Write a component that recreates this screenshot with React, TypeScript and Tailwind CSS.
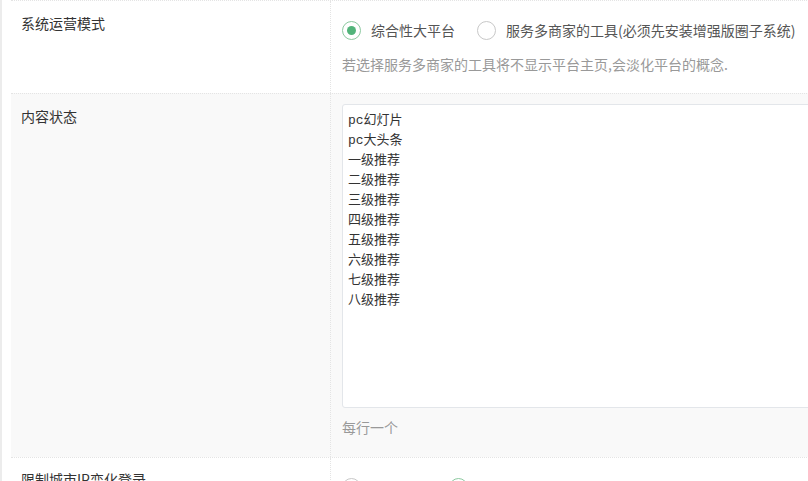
import React from "react";

const font = { fontFamily: '"Noto Sans CJK SC", "Liberation Sans", sans-serif' };

function Radio({ checked, label }: { checked?: boolean; label: string }) {
  return (
    <label className="flex items-center gap-[10px] mr-[22px] text-[14px] text-[#555] leading-[20px]">
      <span
        className={
          "w-[19px] h-[19px] rounded-full border flex items-center justify-center bg-white " +
          (checked ? "border-[#8cc9a0]" : "border-[#c8c8c8]")
        }
      >
        {checked && <span className="w-[9px] h-[9px] rounded-full bg-[#52b47a]" />}
      </span>
      <span>{label}</span>
    </label>
  );
}

export default function App() {
  const lines = [
    "pc幻灯片",
    "pc大头条",
    "一级推荐",
    "二级推荐",
    "三级推荐",
    "四级推荐",
    "五级推荐",
    "六级推荐",
    "七级推荐",
    "八级推荐",
  ];
  return (
    <div
      className="w-[808px] h-[481px] overflow-hidden bg-white border-l-2 border-[#ececec] pl-[9px]"
      style={font}
    >
      <div className="w-[900px]">
        {/* Row 1 */}
        <div className="grid grid-cols-[320px_1fr] border-t border-dotted border-[#e4e4e4] bg-white">
          <div className="pl-[10px] pt-[12px] text-[14px] leading-[20px] text-[#333] border-r border-dotted border-[#e4e4e4]">
            系统运营模式
          </div>
          <div className="pl-[11px] pt-[18px] pb-[19px]">
            <div className="flex items-center h-[22px]">
              <Radio checked label="综合性大平台" />
              <Radio label="服务多商家的工具(必须先安装增强版圈子系统)" />
            </div>
            <div className="mt-[13px] text-[14px] leading-[20px] text-[#999]">
              若选择服务多商家的工具将不显示平台主页,会淡化平台的概念.
            </div>
          </div>
        </div>
        {/* Row 2 */}
        <div className="grid grid-cols-[320px_1fr] border-t border-dotted border-[#e4e4e4] bg-[#f9f9f9]">
          <div className="pl-[10px] pt-[12px] text-[14px] leading-[20px] text-[#333] border-r border-dotted border-[#e4e4e4]">
            内容状态
          </div>
          <div className="pl-[11px] pt-[10px] pb-[20px]">
            <textarea
              readOnly
              defaultValue={lines.join("\n")}
              className="block w-[520px] h-[304px] resize-none bg-white border border-[#e3e6ea] rounded-[3px] px-[5px] pt-[6px] text-[13px] leading-[20px] text-[#333] outline-none"
              style={{ fontFamily: '"Liberation Mono", "Noto Sans CJK SC", monospace' }}
            />
            <div className="mt-[9px] text-[14px] leading-[20px] text-[#999]">每行一个</div>
          </div>
        </div>
        {/* Row 3 */}
        <div className="grid grid-cols-[320px_1fr] border-t border-dotted border-[#e4e4e4] bg-white">
          <div className="pl-[10px] pt-[11px] text-[14px] leading-[20px] text-[#333] border-r border-dotted border-[#e4e4e4]">
            限制城市IP变化登录
          </div>
          <div className="pl-[11px] pt-[18px] pb-[18px]">
            <div className="flex items-center h-[22px]">
              <Radio label="开启限制" />
              <Radio checked label="关闭" />
            </div>
          </div>
        </div>
      </div>
    </div>
  );
}
